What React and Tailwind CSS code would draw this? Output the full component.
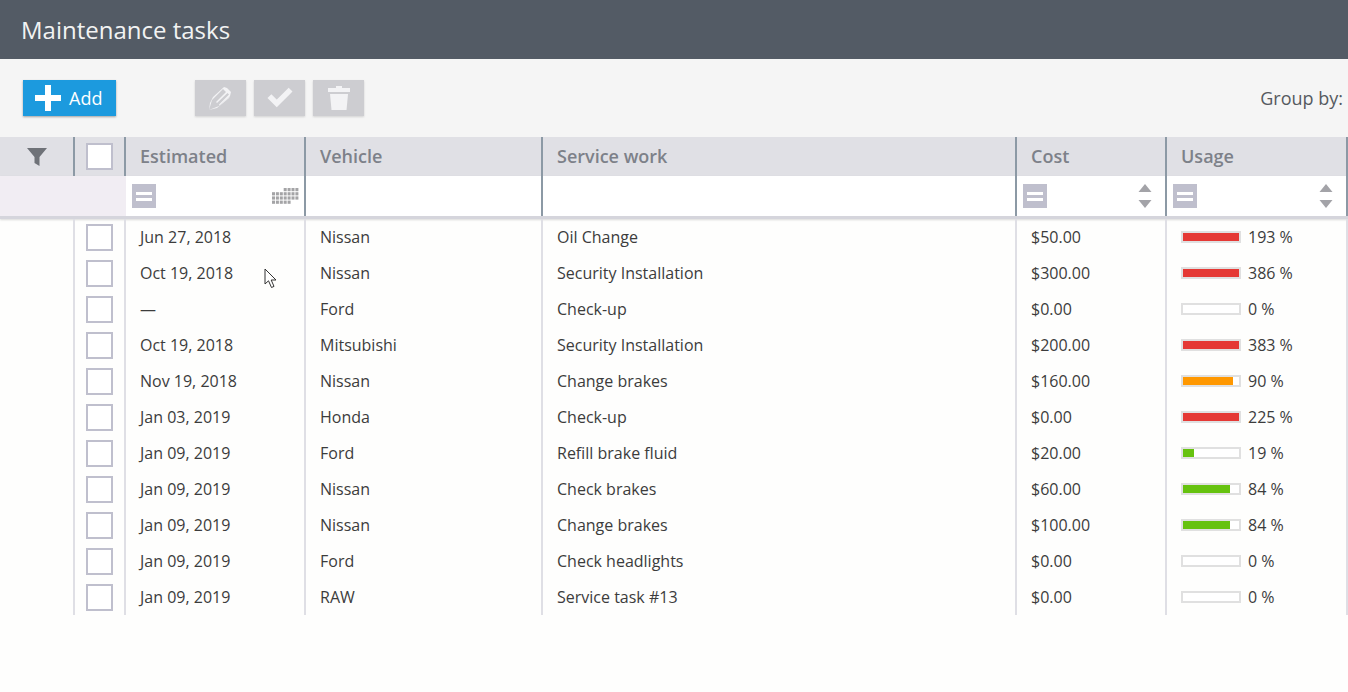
import React from 'react';
import { Check, Trash2 } from 'lucide-react';

const rows = [
  { date: 'Jun 27, 2018', vehicle: 'Nissan', work: 'Oil Change', cost: '$50.00', usage: 193 },
  { date: 'Oct 19, 2018', vehicle: 'Nissan', work: 'Security Installation', cost: '$300.00', usage: 386 },
  { date: '—', vehicle: 'Ford', work: 'Check-up', cost: '$0.00', usage: 0 },
  { date: 'Oct 19, 2018', vehicle: 'Mitsubishi', work: 'Security Installation', cost: '$200.00', usage: 383 },
  { date: 'Nov 19, 2018', vehicle: 'Nissan', work: 'Change brakes', cost: '$160.00', usage: 90 },
  { date: 'Jan 03, 2019', vehicle: 'Honda', work: 'Check-up', cost: '$0.00', usage: 225 },
  { date: 'Jan 09, 2019', vehicle: 'Ford', work: 'Refill brake fluid', cost: '$20.00', usage: 19 },
  { date: 'Jan 09, 2019', vehicle: 'Nissan', work: 'Check brakes', cost: '$60.00', usage: 84 },
  { date: 'Jan 09, 2019', vehicle: 'Nissan', work: 'Change brakes', cost: '$100.00', usage: 84 },
  { date: 'Jan 09, 2019', vehicle: 'Ford', work: 'Check headlights', cost: '$0.00', usage: 0 },
  { date: 'Jan 09, 2019', vehicle: 'RAW', work: 'Service task #13', cost: '$0.00', usage: 0 },
];

const barColor = (usage) => {
  if (usage > 100) return 'bg-[#e53935]';
  if (usage >= 90) return 'bg-[#ff9800]';
  return 'bg-[#66c20f]';
};

const EqualsBox = () => (
  <span className="flex h-6 w-6 flex-col items-center justify-center gap-[3px] bg-[#bfbfcd]">
    <span className="h-[3px] w-4 bg-white" />
    <span className="h-[3px] w-4 bg-white" />
  </span>
);

const Spinner = () => (
  <svg width="14" height="26" viewBox="0 0 14 26" className="block">
    <path d="M7 1 L13.5 9 L0.5 9 Z" fill="#a3a3a8" />
    <path d="M7 25 L13.5 17 L0.5 17 Z" fill="#a3a3a8" />
  </svg>
);

const CalendarDots = () => (
  <svg width="27" height="17" viewBox="0 0 27 17" fill="#a4a4a6" className="block">
    {[0, 1, 2, 3].map((r) =>
      [0, 1, 2, 3, 4, 5, 6].map((c) =>
        (r === 0 && c < 3) || (r === 3 && c > 4) ? null : (
          <rect key={`${r}-${c}`} x={c * 3.9} y={r * 4.2} width="3" height="3.2" />
        )
      )
    )}
  </svg>
);

const Pen = () => (
  <svg width="26" height="26" viewBox="0 0 26 26" fill="none" className="block">
    <path d="M1 25 L4 15 L15 4 L18 7 L8 17 L9 18 L19.5 8 L21 9.5 L11 19.5 L11.5 20.5 L22 11 L23 7 L19 3 L16 2 L5 12 L2 18 Z" fill="#f3f3f5" />
    <path d="M1 25 L9 23 L21 13 L22 11 L11 21 Z" fill="#f3f3f5" />
  </svg>
);

const App = () => {
  return (
    <div className="h-[692px] w-[1348px] overflow-hidden bg-[#fefefd] font-['Open_Sans',sans-serif] text-[#3c3c3c]">
      <div className="flex h-[59px] items-center bg-[#535b65] pl-[21px] text-[24px] text-[#f2f3f3] shadow-[0_1px_3px_rgba(0,0,0,0.35)]">
        Maintenance tasks
      </div>

      <div className="flex h-[78px] items-start bg-[#f5f5f5] pt-[21px]">
        <button className="ml-[23px] flex h-9 w-[93px] items-center gap-[8px] bg-[#1c9ade] pl-[12px] text-[18px] text-white shadow-[0_1px_2px_rgba(0,0,0,0.35)]">
          <svg width="26" height="26" viewBox="0 0 26 26" fill="#fff" className="block shrink-0">
            <path d="M10 0 H16 V10 H26 V16 H16 V26 H10 V16 H0 V10 H10 Z" />
          </svg>
          Add
        </button>
        <div className="ml-[79px] flex gap-2">
          <button className="flex h-9 w-[51px] items-center justify-center bg-[#cdcdd1] shadow-[0_1px_2px_rgba(0,0,0,0.15)]">
            <Pen />
          </button>
          <button className="flex h-9 w-[51px] items-center justify-center bg-[#cdcdd1] shadow-[0_1px_2px_rgba(0,0,0,0.15)]">
            <Check size={26} strokeWidth={5} strokeLinecap="square" strokeLinejoin="miter" color="#f3f3f5" />
          </button>
          <button className="flex h-9 w-[51px] items-center justify-center bg-[#cdcdd1] shadow-[0_1px_2px_rgba(0,0,0,0.15)]">
            <Trash2 size={0} className="hidden" />
            <svg width="22" height="24" viewBox="0 0 22 24" fill="#f3f3f5" className="block">
              <path d="M8 0 H14 V2 H22 V6 H0 V2 H8 Z" />
              <path d="M2 8 H20 L18.5 24 H3.5 Z" />
            </svg>
          </button>
        </div>
        <div className="ml-auto pr-[5px] pt-[5px] text-[18px] leading-[26px] text-[#555a60]">Group by:</div>
      </div>

      <div className="grid h-[39px] grid-cols-[75px_51px_180px_237px_474px_150px_181px] bg-[#e0e0e5] text-[18px] font-semibold text-[#7d8189]">
        <div className="flex items-center justify-center border-r-2 border-[#8c99a5] pl-1 pr-[3px]">
          <svg width="20" height="18" viewBox="0 0 20 18" fill="#6f7278" className="block">
            <path d="M0 0 H20 L12.5 9 V18 L7.5 15 V9 Z" />
          </svg>
        </div>
        <div className="flex items-center justify-center border-r-2 border-[#8c99a5] pr-[1px]">
          <span className="h-[27px] w-[27px] border-2 border-[#bfbfcd] bg-white" />
        </div>
        <div className="flex items-center border-r-2 border-[#8c99a5] pl-[14px]">Estimated</div>
        <div className="flex items-center border-r-2 border-[#8c99a5] pl-[14px]">Vehicle</div>
        <div className="flex items-center border-r-2 border-[#8c99a5] pl-[14px]">Service work</div>
        <div className="flex items-center border-r-2 border-[#8c99a5] pl-[14px]">Cost</div>
        <div className="flex items-center border-r-2 border-[#8c99a5] pl-[14px]">Usage</div>
      </div>

      <div className="grid h-[43px] grid-cols-[126px_180px_237px_474px_150px_181px] border-b-[3px] border-[#d5d5dc] bg-white shadow-[0_1px_2px_rgba(0,0,0,0.15)]">
        <div className="bg-[#f1edf3]" />
        <div className="flex items-center justify-between border-r-2 border-[#8c99a5] pl-[6px] pr-[5px]">
          <EqualsBox />
          <CalendarDots />
        </div>
        <div className="border-r-2 border-[#8c99a5]" />
        <div className="border-r-2 border-[#8c99a5]" />
        <div className="flex items-center justify-between border-r-2 border-[#8c99a5] pl-[6px] pr-[13px]">
          <EqualsBox />
          <Spinner />
        </div>
        <div className="flex items-center justify-between border-r-2 border-[#8c99a5] pl-[6px] pr-[13px]">
          <EqualsBox />
          <Spinner />
        </div>
      </div>

      {rows.map((row, i) => (
        <div key={i} className="grid h-9 grid-cols-[75px_51px_180px_237px_474px_150px_181px] text-[16px]">
          <div className="border-r-2 border-[#dfdfe5]" />
          <div className="flex items-center justify-center border-r-2 border-[#dfdfe5] pr-[1px]">
            <span className="h-[27px] w-[27px] border-2 border-[#bfbfcd] bg-white" />
          </div>
          <div className="flex items-center border-r-2 border-[#dfdfe5] pl-[14px]">{row.date}</div>
          <div className="flex items-center border-r-2 border-[#dfdfe5] pl-[14px]">{row.vehicle}</div>
          <div className="flex items-center border-r-2 border-[#dfdfe5] pl-[14px]">{row.work}</div>
          <div className="flex items-center border-r-2 border-[#dfdfe5] pl-[14px]">{row.cost}</div>
          <div className="flex items-center border-r-2 border-[#dfdfe5] pl-[14px]">
            <div className="h-3 w-[60px] border-2 border-[#e0e0e0] bg-white">
              <div className={`h-full ${barColor(row.usage)}`} style={{ width: `${Math.min(row.usage, 100)}%` }} />
            </div>
            <span className="ml-[7px]">{row.usage} %</span>
          </div>
        </div>
      ))}

      <svg width="16" height="22" viewBox="0 0 16 22" className="absolute left-[264px] top-[268px]">
        <path d="M1 1 V16 L4.5 12.8 L7.5 19.5 L10 18.4 L7.2 12 H12 Z" fill="#fff" stroke="#333" strokeWidth="1" />
      </svg>
    </div>
  );
};

export default App;
